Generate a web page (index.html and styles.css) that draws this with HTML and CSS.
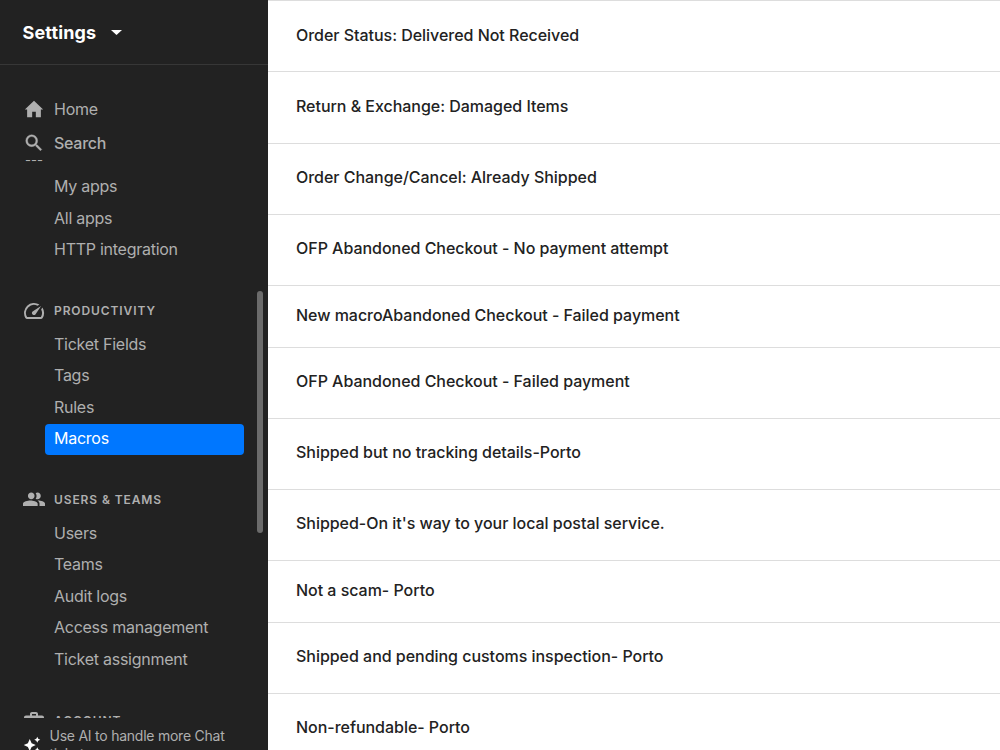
FILE: index.html
```html
<!DOCTYPE html>
<html lang="en">
<head>
  <meta charset="UTF-8" />
  <meta name="viewport" content="width=device-width, initial-scale=1.0" />
  <title>Settings - Macros</title>
  <link rel="stylesheet" href="styles.css">
</head>
<body>
  <aside class="sidebar">
    <header class="sidebar-header">
      <span class="title">Settings</span>
      <svg class="caret" width="11" height="5" viewBox="0 0 11 5"><path d="M0 0h11L5.5 5z" /></svg>
    </header>

    <div class="top-links">
      <a class="top-link">
        <svg class="icon" viewBox="0 0 24 24"><path d="M10 21v-6h4v6h5.500v-8.500H22L12 3 2 12.500h2.500V21z" /></svg>
        <span>Home</span>
      </a>
      <a class="top-link search">
        <svg class="icon thick" viewBox="0 0 24 24"><path d="M15.5 14h-.79l-.28-.27A6.471 6.471 0 0 0 16 9.5 6.5 6.5 0 1 0 9.5 16c1.61 0 3.09-.59 4.23-1.57l.27.28v.79l5 4.99L20.49 19l-4.99-5zm-6 0C7.01 14 5 11.99 5 9.5S7.01 5 9.5 5 14 7.01 14 9.5 11.99 14 9.5 14z" /></svg>
        <span>Search</span>
      </a>
      <div class="divider">---</div>
    </div>

    <nav class="menu">
      <ul class="apps">
        <li>My apps</li>
        <li>All apps</li>
        <li>HTTP integration</li>
      </ul>

      <h2>
        <svg class="icon big" viewBox="0 0 24 24"><path d="M20.38 8.57l-1.23 1.85a8 8 0 0 1-.22 7.58H5.07A8 8 0 0 1 15.58 6.85l1.85-1.23A10 10 0 0 0 3.35 19a2 2 0 0 0 1.72 1h13.85a2 2 0 0 0 1.74-1 10 10 0 0 0-.27-10.44zm-9.79 6.84a2 2 0 0 0 2.83 0l5.66-8.49-8.49 5.66a2 2 0 0 0 0 2.83z" /></svg>
        Productivity
      </h2>
      <ul>
        <li>Ticket Fields</li>
        <li>Tags</li>
        <li>Rules</li>
        <li class="active">Macros</li>
      </ul>

      <h2 class="users">
        <svg class="icon" viewBox="0 0 24 24"><path d="M16.5 13.500c-.19 0-.4.010-.62.030C17.200 14.400 18 15.500 18 17v2.500h6V17c0-2.500-4.700-3.500-7.500-3.500zM15.800 12.200c2 0 3.600-1.600 3.600-3.600S17.800 5 15.800 5c-.7 0-1.400.2-2 .6.700.9 1 1.900 1 3s-.3 2.100-1 3c.6.400 1.300.6 2 .6zM9 12.200c2 0 3.600-1.600 3.600-3.600S11 5 9 5 5.400 6.600 5.400 8.600 7 12.200 9 12.200zM8 13.500c-2.700 0-8 1-8 3.500v2.500h16V17c0-2.500-5.300-3.500-8-3.500z" /></svg>
        Users &amp; Teams
      </h2>
      <ul>
        <li>Users</li>
        <li>Teams</li>
        <li>Audit logs</li>
        <li>Access management</li>
        <li>Ticket assignment</li>
      </ul>

      <h2>
        <svg class="icon big" viewBox="0 0 24 24"><path d="M20 7.500h-4V6c0-1.110-.89-2-2-2h-4c-1.110 0-2 .89-2 2v1.500H4c-1.110 0-2 .89-2 2V19c0 1.110.89 2 2 2h16c1.110 0 2-.89 2-2V9.500c0-1.110-.89-2-2-2zm-6 0h-4V6h4v1.500z" /></svg>
        Account
      </h2>
      <div class="scrollbar"></div>
    </nav>

    <footer class="ai-banner">
      <svg class="sparkle" width="18" height="18" viewBox="0 0 24 24"><path d="M19 9l1.250-2.750L23 5l-2.750-1.250L19 1l-1.250 2.750L15 5l2.750 1.250L19 9zm-7.500.5L9 4 6.500 9.500 1 12l5.500 2.500L9 20l2.500-5.500L17 12l-5.500-2.500zM19 15l-1.250 2.750L15 19l2.750 1.250L19 23l1.250-2.750L23 19l-2.750-1.250L19 15z" /></svg>
      <p>Use AI to handle more Chat tickets</p>
    </footer>
  </aside>

  <main class="macros">
    <div class="row first">Order Status: Delivered Not Received</div>
    <div class="row first">Return &amp; Exchange: Damaged Items</div>
    <div class="row">Order Change/Cancel: Already Shipped</div>
    <div class="row">OFP Abandoned Checkout - No payment attempt</div>
    <div class="row short">New macroAbandoned Checkout - Failed payment</div>
    <div class="row">OFP Abandoned Checkout - Failed payment</div>
    <div class="row">Shipped but no tracking details-Porto</div>
    <div class="row">Shipped-On it's way to your local postal service.</div>
    <div class="row short">Not a scam- Porto</div>
    <div class="row">Shipped and pending customs inspection- Porto</div>
    <div class="row">Non-refundable- Porto</div>
  </main>
</body>
</html>
```
FILE: styles.css
```css
:root {
  --dark: #222222;
  --grey: #afafaf;
  --blue: #0077ff;
  --line: #dddddd;
}

* {
  box-sizing: border-box;
}

html, body {
  margin: 0;
  padding: 0;
  height: 100%;
  overflow: hidden;
  font-family: Inter, 'Liberation Sans', sans-serif;
  font-size: 16px;
}

body {
  display: flex;
  background: white;
}

.sidebar {
  width: 268px;
  height: 750px;
  flex-shrink: 0;
  display: flex;
  flex-direction: column;
  background: var(--dark);
  color: var(--grey);
  letter-spacing: -0.26px;
}

.sidebar-header {
  height: 65px;
  flex-shrink: 0;
  display: flex;
  align-items: center;
  gap: 15px;
  padding-left: 22.5px;
  border-bottom: 1px solid #373737;
  color: white;
  font-size: 18px;
  font-weight: 650;
  letter-spacing: 0.15px;
}

.caret {
  fill: white;
}

.icon {
  width: 22px;
  height: 22px;
  flex-shrink: 0;
  fill: var(--grey);
}

.icon.big {
  width: 24px;
  height: 24px;
  margin: 0 -1px;
}

.icon.thick {
  stroke: var(--grey);
  stroke-width: 0.4px;
}

.top-links {
  height: 106px;
  flex-shrink: 0;
  padding: 27px 0 0 23px;
}

.top-link {
  display: flex;
  align-items: center;
  gap: 9px;
  height: 34px;
}

.search {
  font-weight: 500;
}

.divider {
  padding-left: 2px;
  font-size: 13px;
  line-height: 0;
  letter-spacing: 0;
}

.menu {
  position: relative;
  height: 547px;
  flex-shrink: 0;
  overflow: hidden;
}

.menu ul {
  list-style: none;
  margin: 0;
  padding: 0 24px 0 45px;
}

.menu li {
  height: 31.5px;
  padding-left: 9px;
  line-height: 31px;
}

.menu .active {
  height: 31px;
  margin-top: 0.5px;
  line-height: 29px;
  border-radius: 4px;
  background: var(--blue);
  color: white;
}

.menu h2 {
  display: flex;
  align-items: center;
  gap: 9px;
  height: 22px;
  margin: 34px 0 7px;
  padding-left: 23px;
  font-size: 12px;
  font-weight: 600;
  letter-spacing: 0.9px;
  text-transform: uppercase;
}

.menu .users {
  margin-top: 33.5px;
  margin-bottom: 7.5px;
}

.scrollbar {
  position: absolute;
  top: 120px;
  right: 5px;
  width: 6px;
  height: 242px;
  border-radius: 3px;
  background: #6b6b6b;
}

.ai-banner {
  flex: 1;
  display: flex;
  gap: 9px;
  padding: 9px 20px 0 22.5px;
  overflow: hidden;
  font-size: 14px;
  line-height: 17.5px;
  letter-spacing: -0.24px;
}

.ai-banner p {
  margin: 0;
}

.sparkle {
  flex-shrink: 0;
  margin-top: 9px;
  fill: white;
}

.macros {
  flex: 1;
  padding-top: 0.4px;
}

.row {
  height: 71.1px;
  padding: 0 28px;
  border-top: 1px solid var(--line);
  color: #222222;
  font-weight: 550;
  line-height: 67.4px;
  letter-spacing: -0.03px;
}

.row.first {
  line-height: 68.4px;
}

.row.short {
  height: 62px;
  line-height: 59.4px;
}
```
